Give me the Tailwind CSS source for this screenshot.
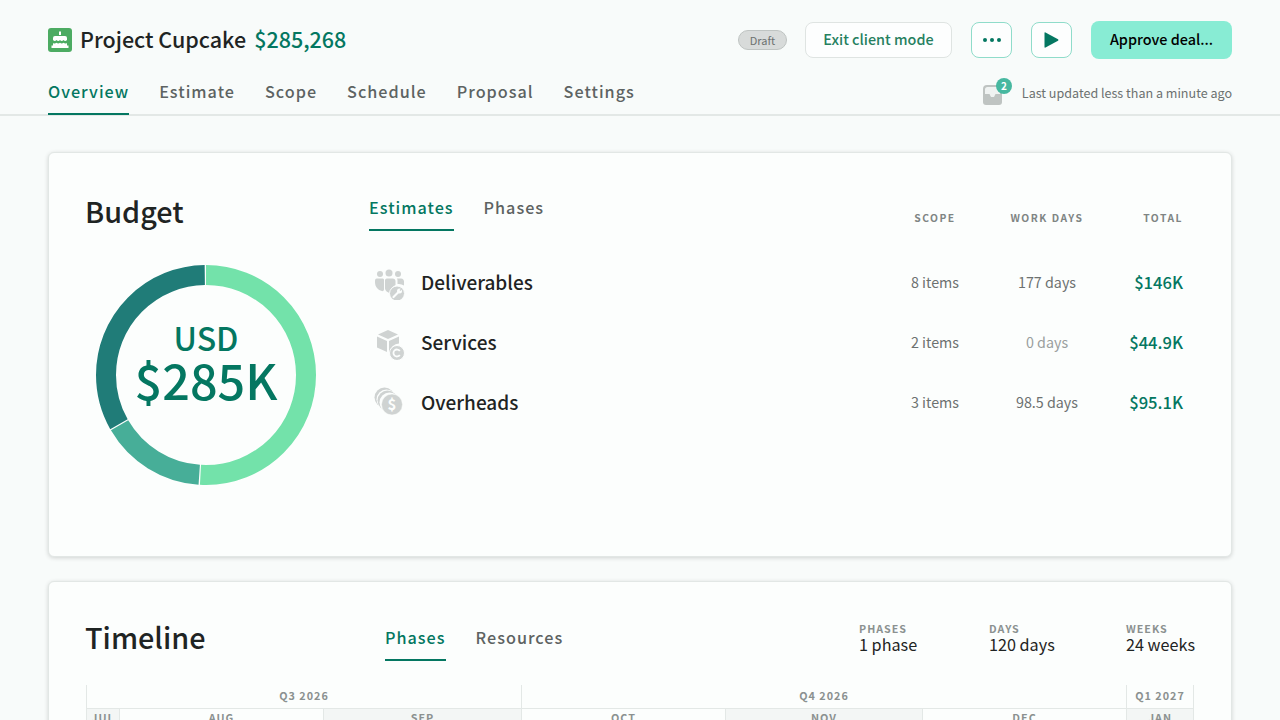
<!DOCTYPE html>
<html lang="en">
<head>
  <meta charset="UTF-8" />
  <title>Project Cupcake</title>
  <script src="https://cdn.jsdelivr.net/npm/@tailwindcss/browser@4"></script>
</head>
<body class="bg-[#f8fbfa] font-['Noto_Sans_CJK_SC','Open_Sans',sans-serif] text-[#1f2423]">
<div class="h-[720px] overflow-hidden">

  <header class="h-[116px] border-b-2 border-[#e3e8e6] px-12">
    <div class="flex items-center h-[80px]">
      <svg class="w-6 h-6 mr-2" viewBox="0 0 24 24">
        <rect width="24" height="24" rx="3" fill="#4cab62"/>
        <path d="M12 3.500v3.500" stroke="#fff" stroke-width="2"/>
        <path d="M7 8h10a2 2 0 0 1 2 2v2c-1.200 1.400-2.400 1.400-3.500 0-1.100 1.400-2.400 1.400-3.500 0-1.100 1.400-2.400 1.400-3.500 0-1.100 1.400-2.300 1.400-3.500 0v-2a2 2 0 0 1 2-2z" fill="#fff"/>
        <path d="M5 15c1.200.8 2.400.6 3.500-.2 1.100.8 2.400.8 3.500 0 1.100.8 2.400.8 3.500 0 1.100.8 2.300 1 3.500.2v2.500h1.500V20H3.500v-2.500H5z" fill="#fff"/>
      </svg>
      <h1 class="text-[21.500px] leading-8 font-medium -mt-[3px]">Project Cupcake</h1>
      <span class="ml-2 text-[21.500px] leading-8 font-medium text-[#047761] -mt-[3px]">$285,268</span>
      <span class="ml-auto flex items-center justify-center w-[49px] h-5 rounded-full bg-[#d8dbda] border border-[#bfc4c2] text-[11px] leading-4 text-[#6c7170]">Draft</span>
      <button class="ml-[18px] w-[147px] h-9 pb-[2px] rounded-lg bg-[#fdfefe] border border-[#dfe4e2] text-[14.400px] leading-5 font-medium text-[#26805f]">Exit client mode</button>
      <button class="ml-[19px] w-[41px] h-9 rounded-lg bg-[#fdfefe] border border-[#8fdcca] flex items-center justify-center gap-[3px]">
        <i class="block w-1 h-1 rounded-full bg-[#047761]"></i><i class="block w-1 h-1 rounded-full bg-[#047761]"></i><i class="block w-1 h-1 rounded-full bg-[#047761]"></i>
      </button>
      <button class="ml-[19px] w-[41px] h-9 rounded-lg bg-[#fdfefe] border border-[#8fdcca] flex items-center justify-center">
        <svg class="w-[15px] h-[16px]" viewBox="0 0 15 16"><path d="M0.500 1Q.5 0 1.500.5L14 7.200Q15 8 14 8.800L1.500 15.500Q.5 16 .5 15z" fill="#047761"/></svg>
      </button>
      <button class="ml-[19px] w-[141px] h-[38px] pb-[2px] rounded-lg bg-[#88ecd4] text-[14.400px] leading-5 font-medium text-black">Approve deal...</button>
    </div>
    <div class="flex items-start h-[34px]">
      <nav class="flex gap-[30px] -mt-px text-[16.200px] leading-6 font-medium tracking-[1px] text-[#5d6362]">
        <a class="h-[36px] border-b-2 border-[#047761] text-[#047761]">Overview</a>
        <a>Estimate</a>
        <a>Scope</a>
        <a>Schedule</a>
        <a>Proposal</a>
        <a>Settings</a>
      </nav>
      <div class="ml-auto flex items-center h-6 pt-px">
        <div class="relative w-[22px] h-[20px] mr-[18px] mt-[4px]">
          <svg class="w-[22px] h-[20px]" viewBox="0 0 22 20"><path d="M5 0h11a4 4 0 0 1 4 4v13a3 3 0 0 1-3 3H4a3 3 0 0 1-3-3V4a4 4 0 0 1 4-4z" fill="#bfc4c2"/><path d="M5.500 2h10a2.500 2.500 0 0 1 2.500 2.500V9h-4.500l-1.500 3H9L7.500 9H3V4.500A2.500 2.500 0 0 1 5.500 2z" fill="#f0f3f2"/></svg>
          <span class="absolute -top-[7px] -right-[8px] w-4 h-4 rounded-full bg-[#47b8a0] text-white text-[10px] leading-4 font-bold text-center">2</span>
        </div>
        <span class="text-[12.550px] leading-5 text-[#6c7170]">Last updated less than a minute ago</span>
      </div>
    </div>
  </header>

  <main class="px-12 pt-9">
    <section class="h-[405px] rounded-md border border-[#e2e7e5] bg-[#fcfefd] shadow-[0_1px_4px_rgba(0,0,0,0.16)] flex pl-9 pr-12 pt-9">
      <div class="w-[284px] shrink-0">
        <h2 class="text-[28.800px] leading-12 font-medium -mt-[2px]">Budget</h2>
        <div class="relative w-[220px] h-[220px] ml-[11px] mt-[30px]">
          <svg class="w-[220px] h-[220px] -rotate-90" viewBox="0 0 220 220" fill="none" stroke-width="20">
            <circle cx="110" cy="110" r="100" pathLength="100" stroke="#73e2aa" stroke-dasharray="50.900 49.100" stroke-dashoffset="0"/>
            <circle cx="110" cy="110" r="100" pathLength="100" stroke="#47ae98" stroke-dasharray="15.500 84.500" stroke-dashoffset="-51.100"/>
            <circle cx="110" cy="110" r="100" pathLength="100" stroke="#207c78" stroke-dasharray="33 67" stroke-dashoffset="-66.800"/>
          </svg>
          <div class="absolute inset-0 flex flex-col items-center pt-[54px] text-[#047761] font-medium">
            <span class="text-[32px] leading-[36px]">USD</span>
            <span class="text-[48.500px] leading-[48px]">$285K</span>
          </div>
        </div>
      </div>
      <div class="flex-1">
        <div class="flex items-start h-[64px]">
          <div class="flex gap-[30px] text-[16.200px] leading-6 font-medium tracking-[1px] text-[#5d6362] pt-[6px]">
            <a class="h-[36px] border-b-2 border-[#047761] text-[#047761]">Estimates</a>
            <a>Phases</a>
          </div>
          <div class="ml-auto flex pt-[21px] text-[10.300px] leading-4 font-bold tracking-[1.500px] text-[#7f8584] text-center">
            <span class="w-[112px]">SCOPE</span>
            <span class="w-[112px]">WORK DAYS</span>
            <span class="w-[80px] text-right">TOTAL</span>
          </div>
        </div>
        <div class="flex items-center h-[60px] pb-[3px]">
          <svg class="w-8 h-8 ml-[5px] mr-[15px] mt-[5px]" viewBox="0 0 32 32" fill="#cfd3d2">
            <circle cx="6" cy="6" r="3"/><circle cx="15" cy="5" r="3.500"/><circle cx="24" cy="6" r="3"/>
            <path d="M3 10.500h6a2 2 0 0 1 1 1v10c0 1-1 2-2 1.500-4-1-7-4-7-9 0-2 0-3.500 2-3.500zM13 10.500h5.500c2 0 3 1 3 3v3.500a9 9 0 0 0-5 8.500c-3-1-5.500-3-5.500-5v-8c0-1 .5-2 2-2zM23.500 10.500H27c2 0 3 1.500 3 3v4a9 9 0 0 0-6.500-1.500v-3c0-1 0-1.500-.5-2.500z"/>
            <circle cx="23" cy="25.500" r="7.500" stroke="#fcfefd" stroke-width="1"/><path d="M19.500 29l5-5" stroke="#fcfefd" stroke-width="2.200" stroke-linecap="round"/><circle cx="25.500" cy="23" r="2.500" fill="#fcfefd"/><path d="M26 22.500l2-2" stroke="#cfd3d2" stroke-width="1.400"/>
          </svg>
          <span class="text-[19px] leading-7 font-medium flex-1">Deliverables</span>
          <span class="w-[112px] text-center text-[14.300px] leading-5 text-[#6c7170]">8 items</span>
          <span class="w-[112px] text-center text-[14.300px] leading-5 text-[#6c7170]">177 days</span>
          <span class="w-[80px] text-right text-[16.600px] leading-6 font-medium text-[#047761]">$146K</span>
        </div>
        <div class="flex items-center h-[60px] pb-[3px]">
          <svg class="w-8 h-8 ml-[5px] mr-[15px] mt-[5px]" viewBox="0 0 32 32" fill="#cfd3d2">
            <path d="M14 2l10 4.500L14 11 4 6.500zM3 8.500l10 4.500v11L3 19.500zM15 13l10-4.500v7a9 9 0 0 0-9 9l-1 .5z"/>
            <circle cx="23" cy="25" r="7.500" stroke="#fcfefd" stroke-width="1"/><path d="M25.800 23a3.500 3.500 0 1 0 0 4" fill="none" stroke="#fcfefd" stroke-width="1.800"/>
          </svg>
          <span class="text-[19px] leading-7 font-medium flex-1">Services</span>
          <span class="w-[112px] text-center text-[14.300px] leading-5 text-[#6c7170]">2 items</span>
          <span class="w-[112px] text-center text-[14.300px] leading-5 text-[#9a9f9e]">0 days</span>
          <span class="w-[80px] text-right text-[16.600px] leading-6 font-medium text-[#047761]">$44.9K</span>
        </div>
        <div class="flex items-center h-[60px] pb-[3px]">
          <svg class="w-8 h-8 ml-[5px] mr-[15px] mt-[3px]" viewBox="0 0 32 32">
            <circle cx="10.500" cy="10.500" r="10" fill="#cfd3d2"/>
            <circle cx="12.500" cy="12.500" r="10" fill="#fcfefd"/>
            <circle cx="13.500" cy="13.500" r="10" fill="#cfd3d2"/>
            <circle cx="15.500" cy="15.500" r="10" fill="#fcfefd"/>
            <circle cx="18" cy="17.500" r="10.500" fill="#cfd3d2" stroke="#fcfefd" stroke-width="0.500"/>
            <text x="18" y="23" text-anchor="middle" font-size="15" font-weight="700" fill="#fcfefd">$</text>
          </svg>
          <span class="text-[19px] leading-7 font-medium flex-1">Overheads</span>
          <span class="w-[112px] text-center text-[14.300px] leading-5 text-[#6c7170]">3 items</span>
          <span class="w-[112px] text-center text-[14.300px] leading-5 text-[#6c7170]">98.5 days</span>
          <span class="w-[80px] text-right text-[16.600px] leading-6 font-medium text-[#047761]">$95.1K</span>
        </div>
      </div>
    </section>

    <section class="mt-6 h-[300px] rounded-md border border-[#e2e7e5] bg-[#fcfefd] shadow-[0_1px_4px_rgba(0,0,0,0.16)] pl-9 pr-9">
      <div class="flex items-start h-[103px] pt-[31px]">
        <h2 class="w-[300px] text-[28.800px] leading-12 font-medium">Timeline</h2>
        <div class="flex gap-[30px] text-[16.200px] leading-6 font-medium tracking-[1px] text-[#5d6362] pt-[12px]">
          <a class="h-[36px] border-b-2 border-[#047761] text-[#047761]">Phases</a>
          <a>Resources</a>
        </div>
        <div class="ml-auto flex text-[16.200px] leading-[18px] pt-[10px]">
          <div class="w-[130px]"><div class="text-[10.700px] leading-[12px] font-bold tracking-[1px] text-[#8b9190]">PHASES</div>1 phase</div>
          <div class="w-[137px]"><div class="text-[10.700px] leading-[12px] font-bold tracking-[1px] text-[#8b9190]">DAYS</div>120 days</div>
          <div class="w-[69px] whitespace-nowrap"><div class="text-[10.700px] leading-[12px] font-bold tracking-[1px] text-[#8b9190]">WEEKS</div>24 weeks</div>
        </div>
      </div>
      <div class="ml-px w-[1108px] border-x border-[#e3e8e6] text-[10.800px] font-bold tracking-[1px] text-[#8b9190] text-center">
        <div class="flex h-6 leading-[20px] border-b border-[#e3e8e6]">
          <div class="w-[434px]">Q3 2026</div>
          <div class="w-[605px] border-l border-[#e3e8e6]">Q4 2026</div>
          <div class="flex-1 border-l border-[#e3e8e6]">Q1 2027</div>
        </div>
        <div class="flex h-8 leading-[17px]">
          <div class="w-[32px] bg-[#f3f6f5]">JUL</div>
          <div class="w-[204px] border-l border-[#e3e8e6]">AUG</div>
          <div class="w-[198px] border-l border-[#e3e8e6] bg-[#f3f6f5]">SEP</div>
          <div class="w-[204px] border-l border-[#e3e8e6]">OCT</div>
          <div class="w-[197px] border-l border-[#e3e8e6] bg-[#f3f6f5]">NOV</div>
          <div class="w-[204px] border-l border-[#e3e8e6]">DEC</div>
          <div class="flex-1 border-l border-[#e3e8e6] bg-[#f3f6f5]">JAN</div>
        </div>
      </div>
    </section>
  </main>
</div>
</body>
</html>
